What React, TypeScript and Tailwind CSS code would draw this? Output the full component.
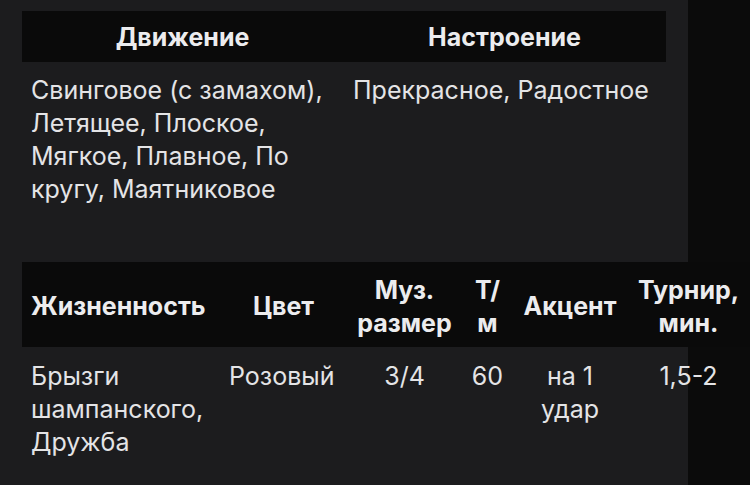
import React from 'react'

const movement = "Свинговое (с замахом), Летящее, Плоское, Мягкое, Плавное, По кругу, Маятниковое"
const mood = "Прекрасное, Радостное"

const headers2 = [
  { label: "Жизненность", align: "text-left" },
  { label: "Цвет", align: "text-center" },
  { label: "Муз. размер", align: "text-center" },
  { label: "Т/м", align: "text-center" },
  { label: "Акцент", align: "text-center" },
  { label: "Турнир, мин.", align: "text-center" },
]

const row2 = [
  { value: "Брызги шампанского, Дружба", align: "text-left" },
  { value: "Розовый", align: "text-left" },
  { value: "3/4", align: "text-center" },
  { value: "60", align: "text-center" },
  { value: "на 1 удар", align: "text-center" },
  { value: "1,5-2", align: "text-center" },
]

const App = () => {
  return (
    <div
      className='w-[750px] h-[485px] overflow-hidden bg-[#0b0b0b] text-[25px] leading-[33px] text-[#e4e4e6]'
      style={{ fontFamily: 'Inter, "Noto Sans", sans-serif' }}
    >
      <div className='w-[688px] h-full bg-[#1c1c1e] pt-[11px] px-[22px]'>
        {/* first table */}
        <div className='grid grid-cols-[321px_323px]'>
          <div className='bg-[#0a0a0a] pt-[10px] pb-[8px] px-[9px] text-center font-bold text-[#ececee]'>Движение</div>
          <div className='bg-[#0a0a0a] pt-[10px] pb-[8px] px-[9px] text-center font-bold text-[#ececee]'>Настроение</div>
          <div className='pt-[12px] pb-[8px] pl-[9px] pr-[6px]'>{movement}</div>
          <div className='pt-[12px] pb-[8px] pl-[10px] pr-[6px]'>{mood}</div>
        </div>

        {/* second table */}
        <div className='mt-[48px] w-[728px] grid grid-cols-[198px_127px_115px_51px_114px_123px]'>
          {headers2.map(h => (
            <div
              key={h.label}
              className={`bg-[#0a0a0a] pt-[13px] pb-[9px] px-[6px] h-[85px] flex items-center justify-center font-bold text-[#ececee] ${h.align}`}
            >
              <span className={h.align === 'text-left' ? 'w-full pl-[3px]' : ''}>{h.label}</span>
            </div>
          ))}
          {row2.map((c, i) => (
            <div key={i} className={`pt-[13px] pb-[8px] ${i === 0 ? 'pl-[9px] pr-[6px]' : 'px-[9px]'} ${c.align}`}>
              {c.value}
            </div>
          ))}
        </div>
      </div>
    </div>
  )
}

export default App
